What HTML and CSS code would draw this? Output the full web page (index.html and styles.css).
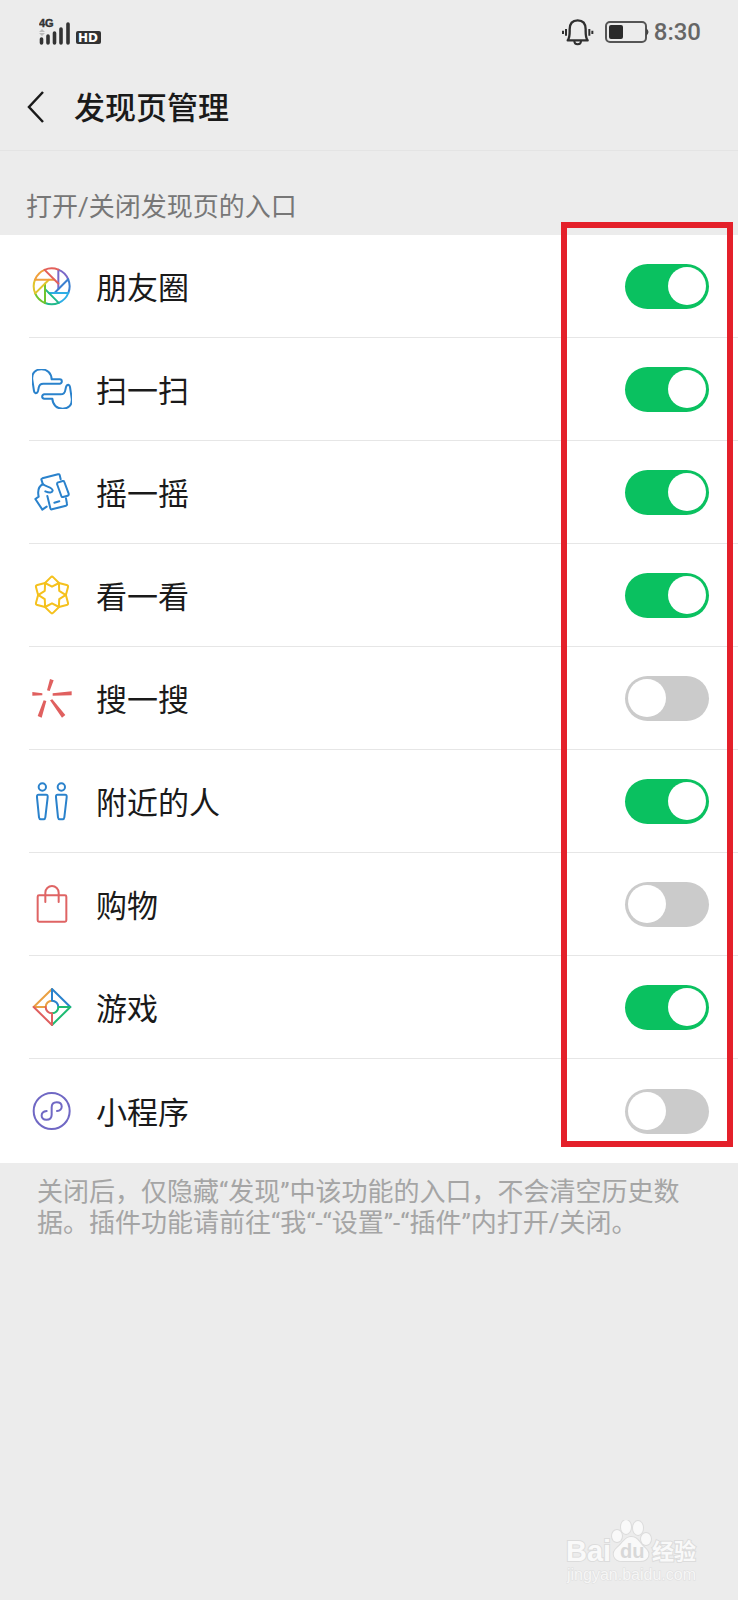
FILE: index.html
```html
<!DOCTYPE html>
<html lang="zh-CN">
<head>
<meta charset="utf-8">
<meta name="viewport" content="width=device-width, initial-scale=1">
<title>发现页管理</title>
<link rel="stylesheet" href="styles.css">
</head>
<body>
<div class="status">
  <svg class="signal" viewBox="0 0 64 28" role="img" aria-label="4G HD">
    <text class="net" x="0" y="9">4G</text>
    <path d="M3 11l3 3H0zM3 18l3-3H0z" fill="#bbb"/>
    <path d="M2.500 21v4M9 18v7M15.500 15v10M22 11v14M29 6v19" stroke="#333" stroke-width="3.600" stroke-linecap="round"/>
    <rect x="37" y="13" width="25" height="13" rx="2" fill="#333"/>
    <text class="hd" x="39" y="24">HD</text>
  </svg>
  <div class="status-right">
    <svg class="bell" viewBox="66 50 96 84" role="img" aria-label="振动" fill="none" stroke="#2f2f2f" stroke-width="7">
      <path d="M83 117C90 110 89 100 89 84C89 66 98 57 113 57S137 66 137 84C137 100 136 110 143 117Z" stroke-linejoin="round"/>
      <path d="M103 119c0 13 20 13 20 0M78 83v20M148 83v20" stroke-width="6"/>
      <path d="M69 88v10M157 88v10" stroke-width="6"/>
    </svg>
    <svg class="battery" viewBox="0 0 44 22" role="img" aria-label="电量">
      <rect x="1" y="1" width="40" height="20" rx="4" fill="none" stroke="#555" stroke-width="2"/>
      <rect x="4" y="4" width="14" height="14" rx="2" fill="#2b2b2b"/>
      <path d="M41 7q5 4 0 8z" fill="#444"/>
    </svg>
    <time class="time">8:30</time>
  </div>
</div>
<header class="header">
  <button class="back" type="button" aria-label="返回">
    <svg viewBox="0 0 18 34"><path d="M16 2L2 17L16 32" fill="none" stroke="#1a1a1a" stroke-width="2.500"/></svg>
  </button>
  <h1 class="title">发现页管理</h1>
</header>
<main>
  <h2 class="section">打开/关闭发现页的入口</h2>
  <div class="panel">
    <ul class="list">
      <li class="row">
        <svg class="icon" viewBox="36 48 120 120" aria-hidden="true">
          <defs><path id="blade" d="M49.500-21.200A54 54 0 0 0 20-50V8"/></defs>
          <g transform="translate(95 109)">
            <use href="#blade" stroke="#7b68c8"/>
            <use href="#blade" stroke="#3b7fd0" transform="rotate(45)"/>
            <use href="#blade" stroke="#2eaee6" transform="rotate(90)"/>
            <use href="#blade" stroke="#22b98c" transform="rotate(135)"/>
            <use href="#blade" stroke="#6fc52f" transform="rotate(180)"/>
            <use href="#blade" stroke="#e0c52c" transform="rotate(225)"/>
            <use href="#blade" stroke="#f0a03c" transform="rotate(270)"/>
            <use href="#blade" stroke="#e3605a" transform="rotate(315)"/>
          </g>
        </svg>
        <label class="label" for="s1">朋友圈</label>
        <input class="switch" id="s1" type="checkbox" role="switch" checked>
      </li>
      <li class="row">
        <svg class="icon" viewBox="36 359 120 120" stroke="#2a82cc" aria-hidden="true">
          <defs><path id="hand" d="M42 425L37 392C34 372 46 360 64 360C82 360 94 372 95 390H119A6 6 0 0 1 119 403H70C60 403 57 408 56 416L54 425Q52 432 47 432Q43 431 42 425Z"/></defs>
          <use href="#hand"/>
          <use href="#hand" transform="rotate(180 96 419)"/>
        </svg>
        <label class="label" for="s2">扫一扫</label>
        <input class="switch" id="s2" type="checkbox" role="switch" checked>
      </li>
      <li class="row">
        <svg class="icon" viewBox="36 66 120 120" stroke="#2a82cc" aria-hidden="true">
          <path d="M68 101L64 88Q64 86 67 85L114 73Q118 72 119 75L122 88"/>
          <path d="M115 97L128 93Q132 92 133 96L146 131Q147 136 143 137L129 141Q125 142 124 138L111 102Q111 98 115 97Z"/>
          <path d="M138 145L141 162Q142 166 138 167L96 178Q92 179 91 175L82 138"/>
          <path d="M69 102C56 109 52 122 56 140L46 147L67 179L80 170M69 102C75 111 97 110 98 122Q95 132 76 124"/>
          <path d="M103 158L118 154"/>
        </svg>
        <label class="label" for="s3">摇一摇</label>
        <input class="switch" id="s3" type="checkbox" role="switch" checked>
      </li>
      <li class="row">
        <svg class="icon" viewBox="36 378 120 120" stroke="#f5c11d" aria-hidden="true">
          <defs><path id="petal" d="M-21-36L-4-53Q0-57 4-53L21-36L0-25Z"/></defs>
          <g transform="translate(96 438)">
            <use href="#petal"/>
            <use href="#petal" transform="rotate(60)"/>
            <use href="#petal" transform="rotate(120)"/>
            <use href="#petal" transform="rotate(180)"/>
            <use href="#petal" transform="rotate(240)"/>
            <use href="#petal" transform="rotate(300)"/>
          </g>
        </svg>
        <label class="label" for="s4">看一看</label>
        <input class="switch" id="s4" type="checkbox" role="switch" checked>
      </li>
      <li class="row">
        <svg class="icon" viewBox="36 57 120 120" aria-hidden="true">
          <path class="solid" d="M90 60L101 64L89 96L81 94ZM37 99L67 103V109L37 110ZM98 103L155 97V109L98 110ZM71 124L79 126L65 176L53 171ZM90 124L97 121L136 168L126 176Z"/>
        </svg>
        <label class="label" for="s5">搜一搜</label>
        <input class="switch" id="s5" type="checkbox" role="switch">
      </li>
      <li class="row">
        <svg class="icon" viewBox="36 367 120 120" stroke="#2a82cc" aria-hidden="true">
          <defs><g id="person"><circle cx="67" cy="385" r="11"/><path d="M56 408H78Q84 408 83 416L76 476Q75 482 71 482H62Q58 482 57 476L51 416Q50 408 56 408Z"/></g></defs>
          <use href="#person"/>
          <use href="#person" x="57"/>
        </svg>
        <label class="label" for="s6">附近的人</label>
        <input class="switch" id="s6" type="checkbox" role="switch" checked>
      </li>
      <li class="row">
        <svg class="icon" viewBox="36 48 120 120" stroke="#df6464" aria-hidden="true">
          <rect x="53" y="82" width="86" height="79" rx="4"/>
          <path d="M76 102V74A20 20 0 0 1 116 74V102"/>
        </svg>
        <label class="label" for="s7">购物</label>
        <input class="switch" id="s7" type="checkbox" role="switch">
      </li>
      <li class="row">
        <svg class="icon" viewBox="36 357 120 120" aria-hidden="true">
          <g transform="translate(96 417)">
            <path d="M-19 0H-55L0-54M-19 0A19 19 0 0 1 0-19" stroke="#eaa043"/>
            <path d="M0-19V-54L55 0M0-19A19 19 0 0 1 19 0" stroke="#2a82cc"/>
            <path d="M19 0H55L0 54M19 0A19 19 0 0 1 0 19" stroke="#1dbb72"/>
            <path d="M0 19V54L-55 0M0 19A19 19 0 0 1-19 0" stroke="#df5f5f"/>
          </g>
        </svg>
        <label class="label" for="s8">游戏</label>
        <input class="switch" id="s8" type="checkbox" role="switch" checked>
      </li>
      <li class="row">
        <svg class="icon" viewBox="36 37 120 120" stroke="#7068c4" aria-hidden="true">
          <circle cx="95" cy="97" r="54"/>
          <path d="M80 97C60 99 60 123 79 123Q95 123 95 108V86Q95 71 110 71C130 71 130 96 111 97"/>
        </svg>
        <label class="label" for="s9">小程序</label>
        <input class="switch" id="s9" type="checkbox" role="switch">
      </li>
    </ul>
    <div class="highlight"></div>
  </div>
  <p class="note">关闭后，仅隐藏“发现”中该功能的入口，不会清空历史数据。插件功能请前往“我“-“设置”-“插件”内打开/关闭。</p>
</main>
<footer class="footer">
  <svg class="brand" viewBox="0 0 136 64" role="img" aria-label="Baidu 经验">
    <g class="paw">
      <ellipse cx="51" cy="16" rx="5" ry="6"/>
      <ellipse cx="60" cy="7" rx="5" ry="7"/>
      <ellipse cx="72" cy="8" rx="5" ry="7"/>
      <ellipse cx="80" cy="19" rx="5" ry="6"/>
      <path d="M65 17C59 17 57 23 51 28C45 33 48 41 56 41H74C83 41 85 33 79 28C73 23 72 17 65 17Z"/>
    </g>
    <text class="logo" x="0" y="41">Bai</text>
    <text class="du" x="54" y="38">du</text>
    <text class="cn" x="86" y="39">经验</text>
    <text class="url" x="1" y="60">jingyan.baidu.com</text>
  </svg>
</footer>
</body>
</html>
```
FILE: styles.css
```css
* { box-sizing: border-box; }
body {
  margin: 0;
  min-height: 100vh;
  display: flex;
  flex-direction: column;
  background: #ececec;
  color: #1a1a1a;
  font-family: Roboto, "Noto Sans CJK SC", sans-serif;
}
.status {
  height: 64px;
  padding: 0 37px 0 39px;
  display: flex;
  align-items: center;
  justify-content: space-between;
}
.signal { width: 64px; height: 28px; }
.net { font: bold 11px "Liberation Sans", sans-serif; fill: #333; stroke: #333; stroke-width: 0.4; }
.hd { font: bold 12px "DejaVu Sans", sans-serif; fill: #fff; }
.status-right { display: flex; align-items: center; }
.bell { width: 32px; height: 28px; margin-right: 11px; }
.battery { width: 44px; height: 22px; margin-right: 5px; }
.time { font-size: 24px; font-weight: 500; line-height: 32px; color: #666; }
.header {
  height: 87px;
  padding: 0 27px;
  display: flex;
  align-items: center;
  gap: 29px;
  border-bottom: 1px solid #e4e4e4;
}
.back { width: 18px; height: 34px; padding: 0; border: 0; background: none; }
.back svg { display: block; width: 18px; height: 34px; }
.title { margin: 0; padding-top: 3px; font-size: 31px; font-weight: 500; line-height: 40px; }
.section {
  margin: 0;
  padding: 38px 26px 9px;
  font-size: 26px;
  font-weight: 400;
  line-height: 37px;
  color: #777;
}
.panel { position: relative; background: #fff; }
.list { margin: 0; padding: 0; list-style: none; }
.row {
  height: 103px;
  margin-left: 29px;
  padding: 0 29px 0 3px;
  display: flex;
  align-items: center;
  border-bottom: 1px solid #e6e6e6;
}
.row:last-child { height: 104px; border-bottom: 0; }
.icon {
  width: 40px;
  height: 40px;
  margin-right: 24px;
  fill: none;
  stroke-width: 6;
  stroke-linejoin: round;
  stroke-linecap: round;
}
.solid { fill: #e0605f; }
.label { flex: 1; padding-top: 5px; font-size: 31px; line-height: 40px; }
.switch {
  appearance: none;
  width: 84px;
  height: 45px;
  margin: 0;
  padding: 3px;
  display: flex;
  align-items: center;
  border-radius: 23px;
  background: #cbcbcb;
}
.switch::before {
  content: "";
  width: 38px;
  height: 38px;
  border-radius: 50%;
  background: #fff;
}
.switch:checked { justify-content: flex-end; background: #0ac160; }
.highlight {
  position: absolute;
  top: -13px;
  right: 5px;
  bottom: 16px;
  width: 172px;
  border: 6px solid #e4202a;
  pointer-events: none;
}
.note {
  margin: 0;
  padding: 14px 37px;
  font-size: 26px;
  line-height: 31px;
  color: #a5a5a5;
}
.footer {
  margin-top: auto;
  padding: 0 36px 16px;
  display: flex;
  justify-content: flex-end;
}
.brand { width: 136px; height: 64px; }
.paw, .logo, .cn { fill: #f9f9f9; stroke: #dcdcdc; stroke-width: 2; paint-order: stroke; }
.logo { font: bold 29px "Liberation Sans", sans-serif; }
.du { font: bold 20px "Liberation Sans", sans-serif; fill: #d8d8d8; }
.cn { font: bold 22px "Noto Sans CJK SC", sans-serif; }
.url { font: 16px "Liberation Sans", sans-serif; fill: #f6f6f6; stroke: #dedede; stroke-width: 1; paint-order: stroke; }
```
